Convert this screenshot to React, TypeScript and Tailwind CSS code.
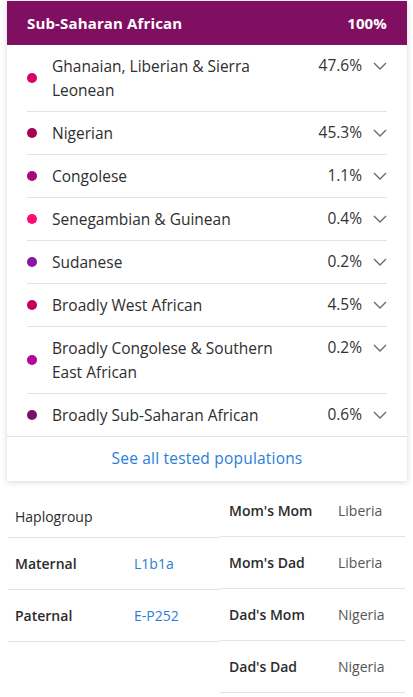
import React from "react"

const populations = [
  { name: "Ghanaian, Liberian & Sierra Leonean", pct: "47.6%", color: "#d9006c" },
  { name: "Nigerian", pct: "45.3%", color: "#a0074e" },
  { name: "Congolese", pct: "1.1%", color: "#a00b75" },
  { name: "Senegambian & Guinean", pct: "0.4%", color: "#ff0a6e" },
  { name: "Sudanese", pct: "0.2%", color: "#8b16a0" },
  { name: "Broadly West African", pct: "4.5%", color: "#c4005e" },
  { name: "Broadly Congolese & Southern East African", pct: "0.2%", color: "#b8009a" },
  { name: "Broadly Sub-Saharan African", pct: "0.6%", color: "#7f0f62" },
]

const haplogroups = [
  { label: "Maternal", value: "L1b1a" },
  { label: "Paternal", value: "E-P252" },
]

const grandparents = [
  { label: "Mom's Mom", value: "Liberia" },
  { label: "Mom's Dad", value: "Liberia" },
  { label: "Dad's Mom", value: "Nigeria" },
  { label: "Dad's Dad", value: "Nigeria" },
]

function Chevron() {
  return (
    <svg width="14" height="8" viewBox="0 0 14 8" className="shrink-0">
      <polyline points="1,1 7,7 13,1" fill="none" stroke="#6b6b6b" strokeWidth="1.4" />
    </svg>
  )
}

export default function App() {
  return (
    <div className="w-[413px] h-[697px] bg-white overflow-hidden font-['Open_Sans',sans-serif] text-[#333]">
      {/* Ancestry card */}
      <div className="ml-[7px] mt-px w-[400px] bg-white shadow-[0_1px_6px_rgba(0,0,0,0.16)]">
        <div className="h-[44px] bg-[#800f62] px-5 flex items-center justify-between text-white font-bold text-[15px] tracking-[0.15px]">
          <span>Sub-Saharan African</span>
          <span>100%</span>
        </div>

        <ul className="px-5">
          {populations.map((p, i) => (
            <li
              key={p.name}
              className={`flex items-center py-[9px] ${i < populations.length - 1 ? "border-b border-[#e3e3e3]" : ""}`}
            >
              <span
                className="w-[10px] h-[10px] rounded-full shrink-0"
                style={{ backgroundColor: p.color }}
              />
              <span className="ml-[15px] w-[245px] text-[15.5px] leading-6 text-[#2e2e2e]">{p.name}</span>
              <div className="ml-auto self-start flex items-center h-6">
                <span className="text-[15.5px] text-[#333]">{p.pct}</span>
                <span className="ml-[11px]">
                  <Chevron />
                </span>
              </div>
            </li>
          ))}
        </ul>

        <div className="border-t border-[#e3e3e3] h-[45px] flex items-center justify-center">
          <span className="text-[15.5px] tracking-[0.2px] text-[#2a7ed6]">See all tested populations</span>
        </div>
      </div>

      {/* Haplogroups and grandparents */}
      <div className="flex mt-[4px] text-[14px]">
        <div className="ml-[8px] w-[212px]">
          <div className="h-[53px] flex items-end pb-[10px] pl-[7px] border-b border-[#e3e3e3] text-[#2b2b2b]">
            Haplogroup
          </div>
          {haplogroups.map((h) => (
            <div key={h.label} className="h-[52px] flex items-center pl-[7px] border-b border-[#e3e3e3]">
              <span className="w-[119px] font-semibold text-[#2b2b2b]">{h.label}</span>
              <span className="text-[#2a7ed6]">{h.value}</span>
            </div>
          ))}
        </div>
        <div className="w-[185px]">
          {grandparents.map((g) => (
            <div key={g.label} className="h-[52px] flex items-center pl-[9px] border-b border-[#e3e3e3]">
              <span className="w-[109px] font-semibold text-[#2b2b2b]">{g.label}</span>
              <span className="text-[#555]">{g.value}</span>
            </div>
          ))}
        </div>
      </div>
    </div>
  )
}
